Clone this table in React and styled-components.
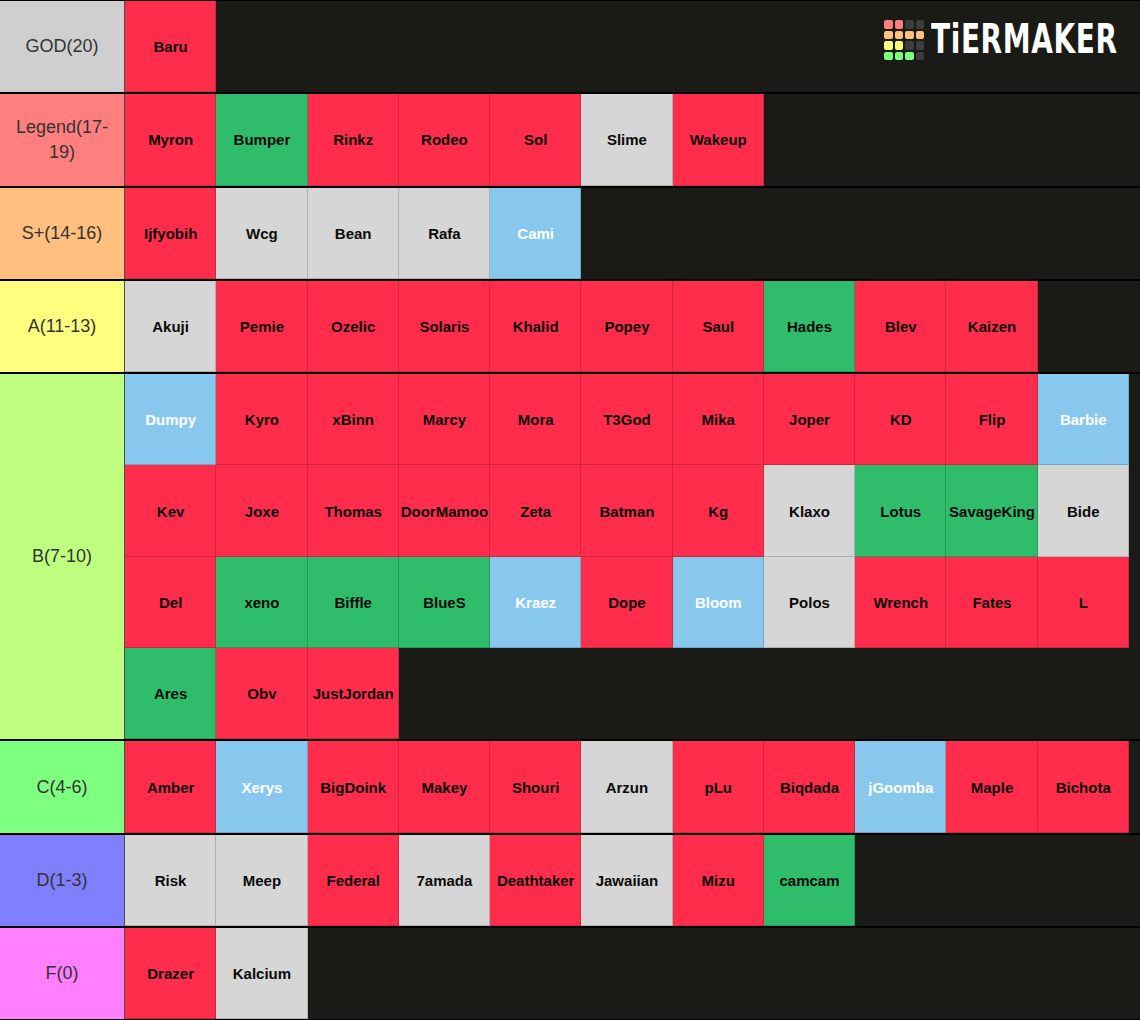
import styled, { createGlobalStyle } from "styled-components";

const GlobalStyle = createGlobalStyle`
  html, body {
    margin: 0;
    padding: 0;
    background: #1a1a17;
  }
  body {
    font-family: "Liberation Sans", Arial, sans-serif;
  }
`;

const tileColors = {
  r: "#ff2d4b",
  g: "#2fbd6b",
  s: "#d6d6d6",
  b: "#88c8ef",
};

const tiers = [
  { label: "GOD(20)", color: "#cfcfcf", items: "Baru:r" },
  {
    label: "Legend(17-19)",
    color: "#ff7f7f",
    items: "Myron:r Bumper:g Rinkz:r Rodeo:r Sol:r Slime:s Wakeup:r",
  },
  {
    label: "S+(14-16)",
    color: "#ffbf7f",
    items: "Ijfyobih:r Wcg:s Bean:s Rafa:s Cami:b",
  },
  {
    label: "A(11-13)",
    color: "#ffff7f",
    items:
      "Akuji:s Pemie:r Ozelic:r Solaris:r Khalid:r Popey:r Saul:r Hades:g Blev:r Kaizen:r",
  },
  {
    label: "B(7-10)",
    color: "#bfff7f",
    items:
      "Dumpy:b Kyro:r xBinn:r Marcy:r Mora:r T3God:r Mika:r Joper:r KD:r Flip:r Barbie:b " +
      "Kev:r Joxe:r Thomas:r DoorMamoo:r Zeta:r Batman:r Kg:r Klaxo:s Lotus:g SavageKing:g Bide:s " +
      "Del:r xeno:g Biffle:g BlueS:g Kraez:b Dope:r Bloom:b Polos:s Wrench:r Fates:r L:r " +
      "Ares:g Obv:r JustJordan:r",
  },
  {
    label: "C(4-6)",
    color: "#7fff7f",
    items:
      "Amber:r Xerys:b BigDoink:r Makey:r Shouri:r Arzun:s pLu:r Biqdada:r jGoomba:b Maple:r Bichota:r",
  },
  {
    label: "D(1-3)",
    color: "#7f7fff",
    items:
      "Risk:s Meep:s Federal:r 7amada:s Deathtaker:r Jawaiian:s Mizu:r camcam:g",
  },
  { label: "F(0)", color: "#ff7fff", items: "Drazer:r Kalcium:s" },
];

const Board = styled.div`
  position: relative;
  width: 1140px;
  border-top: 1px solid #000;
`;

const Row = styled.div`
  display: flex;
  border-bottom: 2px solid #000;
`;

const Label = styled.div`
  width: 125px;
  flex-shrink: 0;
  box-sizing: border-box;
  padding: 0 8px;
  display: flex;
  align-items: center;
  justify-content: center;
  text-align: center;
  background: ${(p) => p.$color};
  border-right: 1px solid #4a4a4a;
  color: #333;
  font-size: 18px;
  line-height: 25px;
`;

const Tiles = styled.div`
  flex: 1;
  display: flex;
  flex-wrap: wrap;
  align-content: flex-start;
  min-height: 91.3px;
  background: #1a1a17;
`;

const Tile = styled.div`
  width: 91.27px;
  height: 91.3px;
  box-sizing: border-box;
  display: flex;
  align-items: center;
  justify-content: center;
  overflow: hidden;
  white-space: nowrap;
  background: ${(p) => tileColors[p.$kind]};
  box-shadow: inset -1px -1px 0 rgba(0, 0, 0, 0.18);
  color: ${(p) => (p.$kind === "b" ? "#fff" : "#0a0a0a")};
  font-size: 15px;
  font-weight: bold;
`;

const Logo = styled.div`
  position: absolute;
  top: 19px;
  left: 884px;
  display: flex;
  align-items: center;
  gap: 7px;
`;

const LogoGrid = styled.div`
  display: grid;
  grid-template-columns: repeat(4, 8.5px);
  grid-auto-rows: 8.5px;
  gap: 2px;
`;

const Cell = styled.span`
  border-radius: 2px;
  background: ${(p) => p.$c};
`;

const LogoText = styled.div`
  color: #fff;
  font-family: "DejaVu Sans", sans-serif;
  font-weight: bold;
  font-size: 28px;
  line-height: 30px;
  letter-spacing: 0.6px;
  white-space: nowrap;
  transform: scaleY(1.45);
  transform-origin: center;
`;

const logoCells = [
  "#ff7f7f", "#ff7f7f", "#3d3d3d", "#3d3d3d",
  "#ffbf7f", "#ffbf7f", "#ffbf7f", "#ffbf7f",
  "#ffff7f", "#ffff7f", "#3d3d3d", "#3d3d3d",
  "#7fff7f", "#7fff7f", "#7fff7f", "#3d3d3d",
];

export default function App() {
  return (
    <>
      <GlobalStyle />
      <Board>
        {tiers.map((tier) => (
          <Row key={tier.label}>
            <Label $color={tier.color}>{tier.label}</Label>
            <Tiles>
              {tier.items.split(" ").map((it) => {
                const [name, kind] = it.split(":");
                return (
                  <Tile key={name} $kind={kind}>
                    {name}
                  </Tile>
                );
              })}
            </Tiles>
          </Row>
        ))}
        <Logo>
          <LogoGrid>
            {logoCells.map((c, i) => (
              <Cell key={i} $c={c} />
            ))}
          </LogoGrid>
          <LogoText>TiERMAKER</LogoText>
        </Logo>
      </Board>
    </>
  );
}
